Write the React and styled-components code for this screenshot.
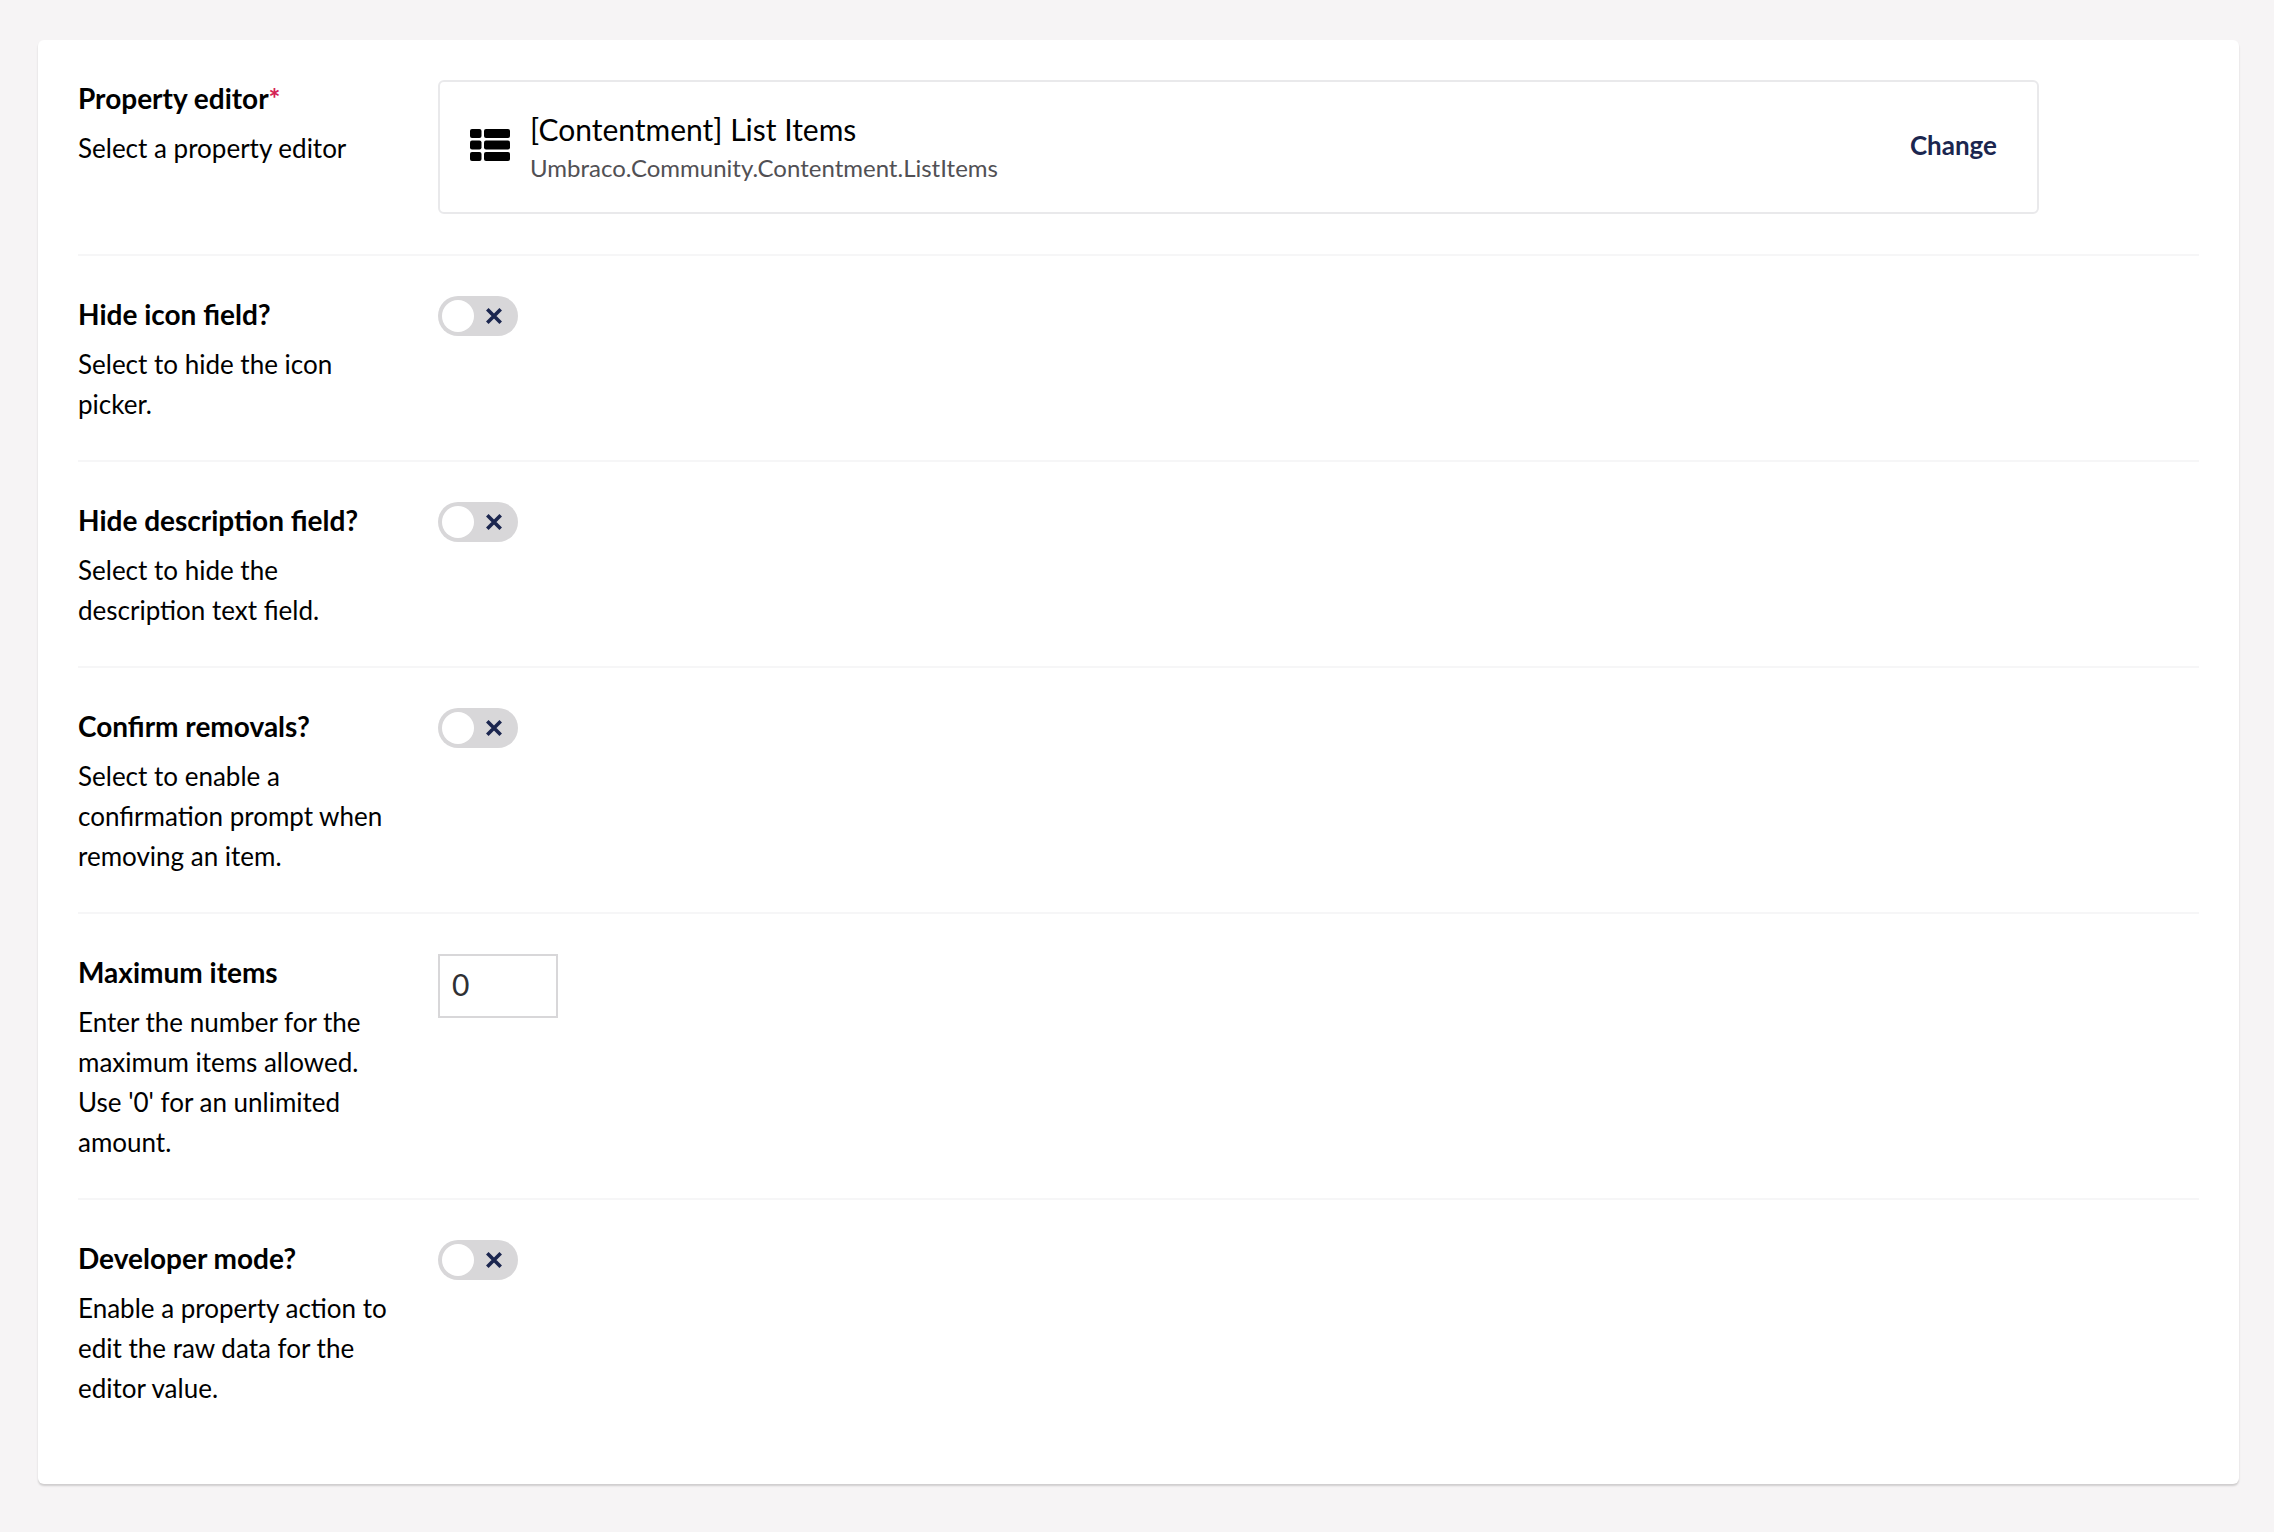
import React from "react";
import styled, { createGlobalStyle } from "styled-components";

const GlobalStyle = createGlobalStyle`
  *, *::before, *::after { box-sizing: border-box; }
  body {
    margin: 0;
    background: #f6f4f5;
    color: #000;
    font-family: Lato, "Open Sans", sans-serif;
    font-size: 26px;
    line-height: 40px;
  }
`;

const Page = styled.main`
  padding: 40px 35px 46px 38px;
`;

const Panel = styled.form`
  padding: 40px;
  background: #fff;
  border-radius: 6px;
  box-shadow: 0 2px 2px rgba(0, 0, 0, 0.16);
`;

const Property = styled.section`
  display: grid;
  grid-template-columns: 320px minmax(0, 1601px);
  column-gap: 40px;
  padding-bottom: 36px;

  & + & {
    padding-top: 40px;
    border-top: 2px solid #f6f6f7;
  }
`;

const Heading = styled.div`
  display: flex;
  flex-direction: column;
  gap: 12px;
`;

const Label = styled.label`
  font-size: 28px;
  font-weight: 700;
  line-height: 36px;
`;

const Required = styled.span`
  color: #d42054;
`;

const Description = styled.p`
  margin: 0;
`;

const Control = styled.div`
  padding-bottom: 4px;
`;

const EditorCard = styled.div`
  display: flex;
  align-items: center;
  height: 134px;
  padding: 0 40px 4px 30px;
  border: 2px solid #e9e9eb;
  border-radius: 6px;
`;

const EditorText = styled.div`
  flex: 1;
  padding-left: 20px;
`;

const EditorName = styled.div`
  font-size: 30px;
  line-height: 46px;
`;

const EditorAlias = styled.div`
  color: #515054;
  font-size: 24px;
  line-height: 32px;
`;

const ChangeButton = styled.button`
  padding: 0;
  border: 0;
  background: none;
  color: #1b264f;
  font: inherit;
  font-weight: 700;
  cursor: pointer;
`;

const Switch = styled.span`
  position: relative;
  display: block;
  width: 80px;
  height: 40px;
`;

const SwitchInput = styled.input`
  appearance: none;
  display: block;
  width: 80px;
  height: 40px;
  margin: 0;
  padding: 4px;
  border-radius: 20px;
  background: #d8d7d9;
  cursor: pointer;

  &::before {
    content: "";
    display: block;
    width: 32px;
    height: 32px;
    border-radius: 50%;
    background: #fff;
  }

  &:checked {
    background: #2bc37c;
  }

  &:checked::before {
    margin-left: 40px;
  }

  &:checked + svg {
    display: none;
  }
`;

const CrossIcon = styled.svg`
  position: absolute;
  top: 12px;
  right: 16px;
  pointer-events: none;
`;

const NumberInput = styled.input`
  appearance: textfield;
  display: block;
  width: 120px;
  height: 64px;
  padding: 0 12px 4px;
  border: 2px solid #d8d7d9;
  border-radius: 0;
  background: #fff;
  color: #303033;
  font: inherit;
  font-size: 30px;

  &::-webkit-inner-spin-button {
    display: none;
  }
`;

function ListIcon() {
  return (
    <svg width="40" height="32" viewBox="0 0 40 32" aria-hidden="true">
      {[0, 11.5, 23].map((y) => (
        <g key={y}>
          <rect x="0" y={y} width="11.5" height="9" rx="2" />
          <rect x="14" y={y} width="26" height="9" rx="2" />
        </g>
      ))}
    </svg>
  );
}

function Field({ id, label, description, required, children }) {
  return (
    <Property>
      <Heading>
        <Label htmlFor={id}>
          {label}
          {required && <Required>*</Required>}
        </Label>
        <Description id={`${id}-description`}>{description}</Description>
      </Heading>
      <Control>{children}</Control>
    </Property>
  );
}

function Toggle({ id }) {
  return (
    <Switch>
      <SwitchInput id={id} type="checkbox" role="switch" aria-describedby={`${id}-description`} />
      <CrossIcon width="16" height="16" viewBox="0 0 16 16" aria-hidden="true">
        <path d="M1.3 1.3 14.7 14.7M14.7 1.3 1.3 14.7" stroke="#1b264f" strokeWidth="3.6" />
      </CrossIcon>
    </Switch>
  );
}

export default function App() {
  return (
    <>
      <GlobalStyle />
      <Page>
        <Panel>
          <Field id="editor" label="Property editor" description="Select a property editor" required>
            <EditorCard>
              <ListIcon />
              <EditorText>
                <EditorName>[Contentment] List Items</EditorName>
                <EditorAlias>Umbraco.Community.Contentment.ListItems</EditorAlias>
              </EditorText>
              <ChangeButton id="editor" type="button">Change</ChangeButton>
            </EditorCard>
          </Field>
          <Field id="hide-icon" label="Hide icon field?" description="Select to hide the icon picker.">
            <Toggle id="hide-icon" />
          </Field>
          <Field
            id="hide-description"
            label="Hide description field?"
            description="Select to hide the description text field."
          >
            <Toggle id="hide-description" />
          </Field>
          <Field
            id="confirm-removals"
            label="Confirm removals?"
            description="Select to enable a confirmation prompt when removing an item."
          >
            <Toggle id="confirm-removals" />
          </Field>
          <Field
            id="max-items"
            label="Maximum items"
            description="Enter the number for the maximum items allowed. Use '0' for an unlimited amount."
          >
            <NumberInput id="max-items" type="number" defaultValue="0" aria-describedby="max-items-description" />
          </Field>
          <Field
            id="developer-mode"
            label="Developer mode?"
            description="Enable a property action to edit the raw data for the editor value."
          >
            <Toggle id="developer-mode" />
          </Field>
        </Panel>
      </Page>
    </>
  );
}
